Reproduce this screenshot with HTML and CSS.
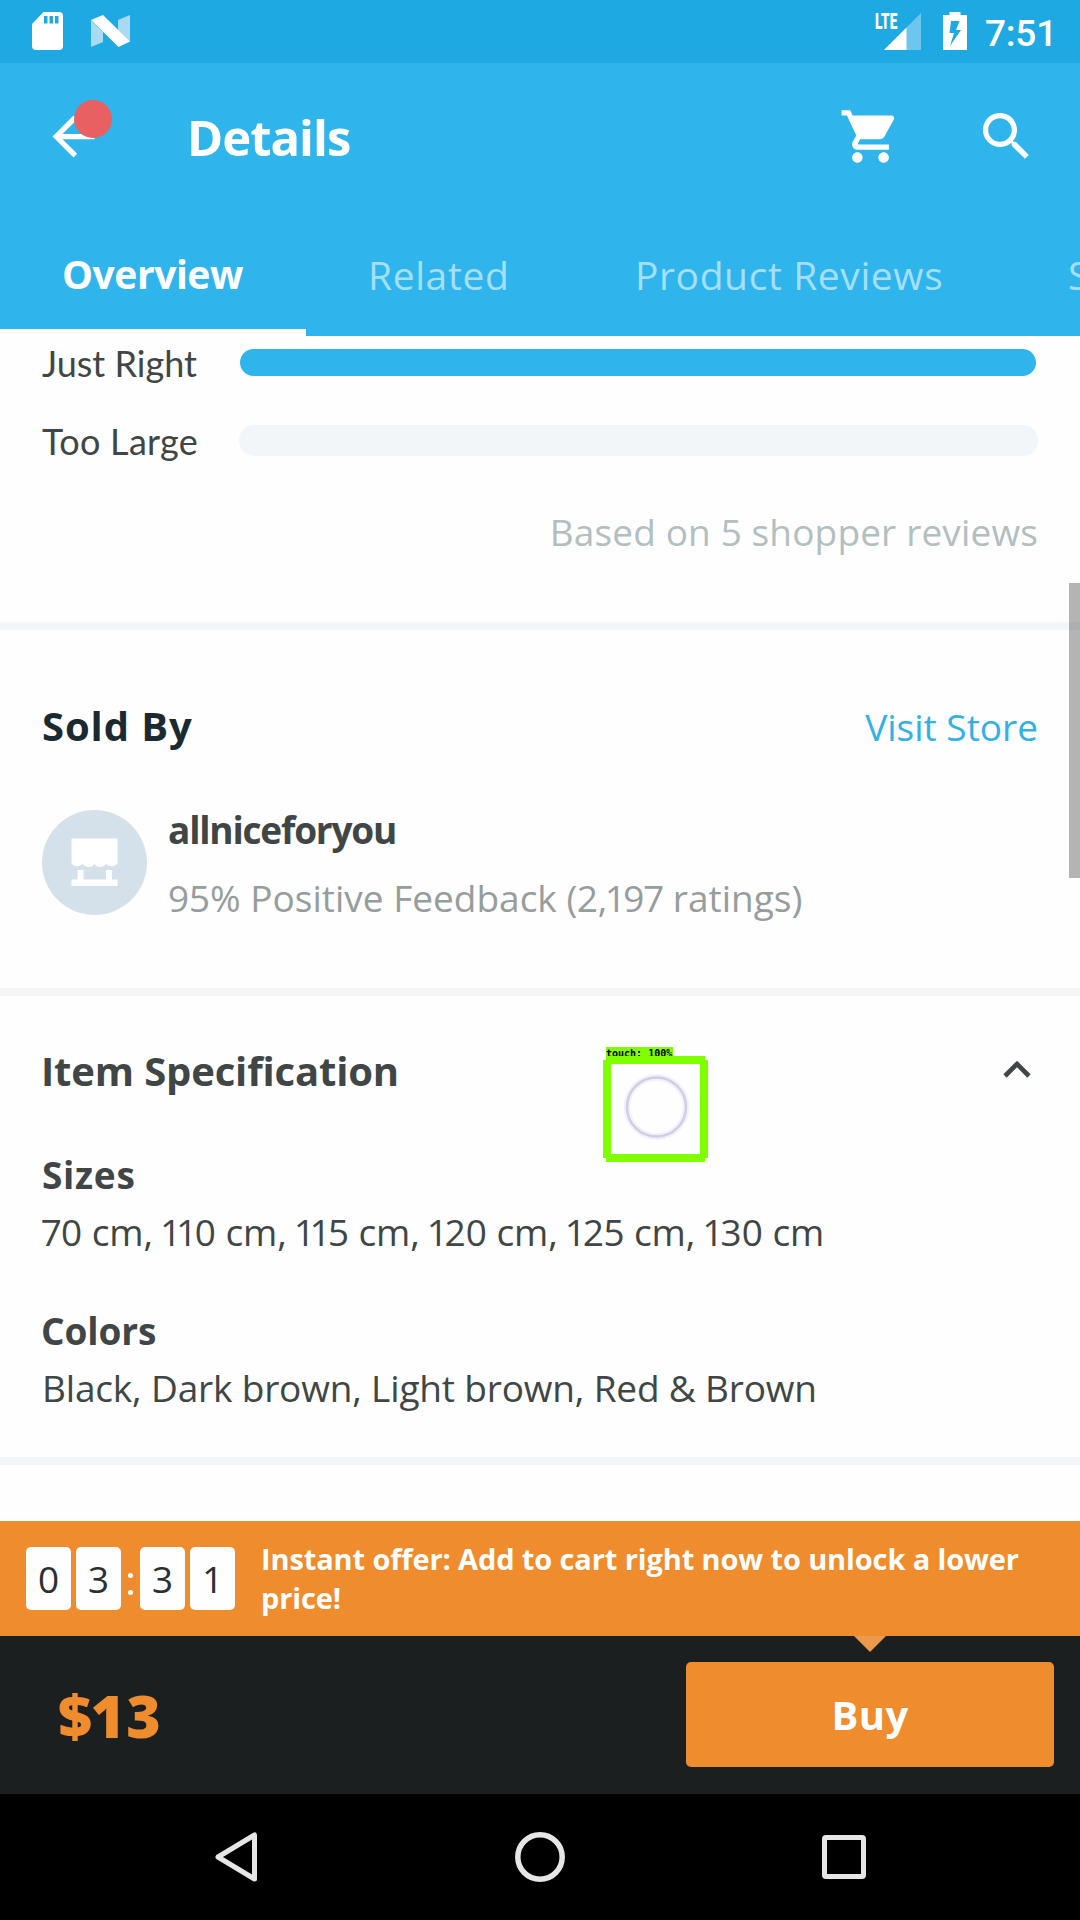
FILE: index.html
```html
<!DOCTYPE html>
<html lang="en">
<head>
<meta charset="utf-8">
<title>Details</title>
<link rel="stylesheet" href="styles.css">
</head>
<body>
<div class="status-bar">
  <div class="status-left">
    <svg class="icon-sd" viewBox="0 0 31 38"><path fill="#fff" fill-rule="evenodd" d="M11.5 0H27a4 4 0 0 1 4 4v30a4 4 0 0 1-4 4H4a4 4 0 0 1-4-4V12zM12 4v7.5h3.5V4zM17.5 4v7.5H21V4zM23 4v7.5h3.500V4z"/></svg>
    <svg class="icon-n" viewBox="0 0 39 32"><path fill="#a8dbf3" d="M0 5.500L12 17v10L0 32zM27 5L39 0v27L27 15z"/><path fill="#fff" d="M0 5L12 0l27 26.500L27.500 32z"/></svg>
  </div>
  <div class="status-right">
    <div class="signal">
      <span class="lte">LTE</span>
      <svg class="icon-signal" viewBox="0 0 37 37"><path fill="#6cc6ed" d="M37 0v37H0z"/><path fill="#fff" d="M22.500 14.500V37H0z"/></svg>
    </div>
    <svg class="icon-battery" viewBox="0 0 24 38"><path fill="#fff" fill-rule="evenodd" d="M6.500 0h11v3H24v35H0V3h6.500zM8 9l-1.500 12h4.500L7 34l11-16h-5l3.500-9z"/></svg>
    <span class="clock">7:51</span>
  </div>
</div>

<header class="header">
  <div class="app-bar">
    <div class="back">
      <svg viewBox="0 0 24 24"><path fill="#fff" d="M20 11H7.830l5.590-5.590L12 4l-8 8 8 8 1.410-1.410L7.830 13H20v-2z"/></svg>
      <span class="badge"></span>
    </div>
    <h1 class="page-title">Details</h1>
    <svg class="icon-cart" viewBox="0 0 24 24"><path fill="#fff" d="M7 18c-1.100 0-1.990.9-1.990 2S5.900 22 7 22s2-.9 2-2-.9-2-2-2zM1 2v2h2l3.600 7.590-1.350 2.450c-.16.28-.25.61-.25.96 0 1.100.9 2 2 2h12v-2H7.420c-.14 0-.25-.11-.25-.25l.03-.12.900-1.630h7.450c.75 0 1.410-.41 1.750-1.030l3.580-6.490A1 1 0 0 0 20 4H5.210l-.94-2H1zm16 16c-1.100 0-1.990.9-1.990 2s.890 2 1.990 2 2-.9 2-2-.9-2-2-2z"/></svg>
    <svg class="icon-search" viewBox="0 0 24 24"><path fill="#fff" d="M15.500 14h-.79l-.28-.27A6.471 6.471 0 0 0 16 9.500 6.500 6.500 0 1 0 9.500 16c1.610 0 3.090-.59 4.230-1.570l.27.28v.79l5 4.990L20.490 19l-4.990-5zm-6 0C7.010 14 5 11.990 5 9.500S7.010 5 9.500 5 14 7.010 14 9.500 11.990 14 9.500 14z"/></svg>
  </div>
  <nav class="tabs">
    <span class="tab tab-active">Overview</span>
    <span class="tab">Related</span>
    <span class="tab tab-reviews">Product Reviews</span>
    <span class="tab tab-next">S</span>
  </nav>
</header>

<main class="content">
  <section class="fit">
    <div class="fit-row"><span class="fit-label fit-tight">Just Right</span><div class="bar"><div class="bar-fill"></div></div></div>
    <div class="fit-row"><span class="fit-label">Too Large</span><div class="bar"></div></div>
    <p class="fit-note">Based on 5 shopper reviews</p>
  </section>

  <section class="seller">
    <div class="seller-head"><h2 class="title-dark">Sold By</h2><a class="store-link">Visit Store</a></div>
    <div class="store">
      <svg class="avatar" viewBox="0 0 105 105"><circle cx="52.500" cy="52.500" r="52.500" fill="#d5e1ea"/><path fill="#fff" d="M29.500 28.500h46v23a5.750 4 0 0 1-11.500 1.500 5.750 4 0 0 1-11.500 0 5.750 4 0 0 1-11.500 0 5.750 4 0 0 1-11.500-1.500zM35.500 60h6v9.500h22.500V60h6v9.500h5.500V76h-46v-6.500h6z"/></svg>
      <div class="store-text"><div class="store-name">allniceforyou</div><div class="store-rating">95% Positive Feedback (2,197 ratings)</div></div>
    </div>
  </section>

  <section class="specs">
    <div class="specs-head"><h2 class="title">Item Specification</h2>
      <svg class="chevron" viewBox="0 0 28 17"><path d="M2 15L14 3l12 12" fill="none" stroke="#3f4645" stroke-width="4.600"/></svg></div>
    <h3 class="spec-name sizes">Sizes</h3>
    <p class="spec-value">70 cm, 110 cm, 115 cm, 120 cm, 125 cm, 130 cm</p>
    <h3 class="spec-name colors">Colors</h3>
    <p class="spec-value spec-colors">Black, Dark brown, Light brown, Red &amp; Brown</p>
  </section>
</main>

<div class="offer">
  <div class="timer"><span class="digit">0</span><span class="digit">3</span><span class="colon"><i></i><i></i></span><span class="digit">3</span><span class="digit">1</span></div>
  <p class="offer-text">Instant offer: Add to cart right now to unlock a lower<br>price!</p>
</div>

<div class="buy-bar">
  <span class="price">$13</span>
  <div class="buy-button">Buy<svg class="pointer" viewBox="0 0 32 16"><path fill="#eb9a4d" d="M0 0h32L16 16z"/></svg></div>
</div>

<div class="nav-bar">
  <svg class="nav-back" viewBox="0 0 42 50"><path d="M39.500 3v44L3 25z" fill="none" stroke="#e6e6e6" stroke-width="5" stroke-linejoin="round"/></svg>
  <svg class="nav-home" viewBox="0 0 50 50"><circle cx="25" cy="25" r="22.200" fill="none" stroke="#e6e6e6" stroke-width="5.500"/></svg>
  <svg class="nav-recent" viewBox="0 0 44 44"><rect x="2.500" y="2.500" width="39" height="39" rx="1.500" fill="none" stroke="#e6e6e6" stroke-width="5"/></svg>
</div>

<div class="scrollbar"></div>
<div class="touch">
  <span class="touch-label">touch: 100%</span>
  <svg class="touch-box" viewBox="0 0 105 106"><path fill="none" stroke="#80ff00" stroke-width="8" d="M3 4h99M3 102h99M4 4v98M101 4v98"/><circle cx="53.500" cy="51" r="29.500" fill="none" stroke="#f1f0fb" stroke-width="6.500"/><circle cx="53.500" cy="51" r="29.500" fill="none" stroke="#cfcee2" stroke-width="2.400"/></svg>
</div>
</body>
</html>
```
FILE: styles.css
```css
* { box-sizing: border-box; margin: 0; padding: 0; }
html, body { width: 1080px; height: 1920px; overflow: hidden; }
body {
  position: relative;
  display: flex;
  flex-direction: column;
  background: #fefefe;
  color: #3f4645;
  font-family: "Open Sans", "Liberation Sans", sans-serif;
  font-variant-ligatures: none;
  font-variant-numeric: proportional-nums;
  white-space: nowrap;
}
svg { display: block; flex: none; }

/* Status bar */
.status-bar {
  flex: none;
  height: 63px;
  display: flex;
  justify-content: space-between;
  padding: 12px 23px 0 32px;
  background: #1fa9e2;
}
.status-left, .status-right { display: flex; align-items: flex-start; }
.icon-sd { width: 31px; height: 38px; }
.icon-n { width: 39px; height: 32px; margin: 3px 0 0 28px; }
.signal { display: flex; margin-right: 22px; }
.lte {
  width: 9px;
  color: #fff;
  font: 900 22px/20px Roboto, sans-serif;
  transform: scaleX(.62);
  transform-origin: 0 0;
}
.icon-signal { width: 37px; height: 37px; margin-top: 1px; }
.icon-battery { width: 24px; height: 38px; margin-right: 18px; }
.clock {
  color: #fff;
  font: 500 37px/44px Roboto, sans-serif;
  font-variant-numeric: normal;
  letter-spacing: -.2px;
}

/* App bar and tabs */
.header { flex: none; height: 273px; background: #2fb5eb; color: #fff; }
.app-bar {
  height: 146px;
  display: flex;
  align-items: center;
  padding: 0 42px;
}
.back { position: relative; width: 63px; height: 63px; }
.back svg { width: 63px; height: 63px; }
.badge {
  position: absolute;
  left: 32px;
  top: -5px;
  width: 38px;
  height: 38px;
  border-radius: 50%;
  background: #e96062;
}
.page-title {
  flex: 1;
  margin: 1px 0 0 82px;
  font-size: 49px;
  line-height: 60px;
  font-weight: 700;
  letter-spacing: -1px;
}
.icon-cart { width: 63px; height: 63px; margin-right: 73px; }
.icon-search { width: 63px; height: 63px; }
.tabs { display: flex; height: 127px; overflow: hidden; }
.tab {
  flex: none;
  width: 264px;
  height: 127px;
  padding: 42px 0 0 62px;
  color: #a4dff8;
  font-size: 39px;
  line-height: 48px;
  letter-spacing: .6px;
}
.tab-active {
  width: 306px;
  border-bottom: 7px solid #fefefe;
  color: #fff;
  font-weight: 700;
  letter-spacing: -.45px;
  padding-top: 41px;
}
.tab-reviews { width: 436px; padding-left: 65px; }
.tab-next { width: 80px; }

/* Scrolling content */
.content { flex: none; height: 1185px; }
.fit { height: 294px; padding: 4px 42px 0; border-bottom: 8px solid #f3f6f8; }
.fit-row { display: flex; align-items: center; height: 44px; margin-bottom: 34px; }
.fit-label {
  width: 197px;
  padding-top: 1px;
  font-family: Lato, "Liberation Sans", sans-serif;
  font-size: 36px;
  line-height: 44px;
  letter-spacing: .3px;
}
.fit-tight { letter-spacing: 0; }
.bar { width: 799px; height: 31px; border-radius: 15px; background: #f3f6f8; }
.bar:has(.bar-fill) { background: none; padding: 2px 2px 2px 1px; }
.bar-fill { height: 27px; border-radius: 13.5px; background: #2fb5eb; }
.fit-note {
  margin-top: 48px;
  text-align: right;
  color: #b2bfbe;
  font-size: 37px;
  line-height: 44px;
  letter-spacing: .15px;
}
.seller { height: 366px; padding: 71px 42px 0; border-bottom: 8px solid #f4f5f6; }
.seller-head { display: flex; justify-content: space-between; align-items: baseline; height: 48px; }
.title-dark, .title { font-size: 40px; line-height: 49px; font-weight: 700; letter-spacing: .9px; }
.title-dark { color: #1b2a30; }
.store-link { color: #33b1e3; font-size: 37px; line-height: 48px; }
.store { display: flex; gap: 22px; margin-top: 58px; }
.avatar { width: 105px; height: 105px; margin-top: 3px; }
.store-name { margin-left: -1px; font-size: 37px; line-height: 45px; height: 44px; font-weight: 700; letter-spacing: -1.2px; }
.store-rating {
  margin-top: 25px;
  margin-left: -1px;
  color: #969d9c;
  font-size: 37px;
  line-height: 44px;
}
.specs { height: 469px; padding: 50px 42px 0; border-bottom: 8px solid #f3f6f8; }
.specs-head { display: flex; justify-content: space-between; height: 48px; }
.title { margin-left: -1px; letter-spacing: -.15px; }
.chevron { width: 28px; height: 17px; margin: 15px 7px 0 0; }
.spec-name { font-size: 37px; line-height: 45px; height: 44px; font-weight: 700; }
.sizes { margin-top: 58px; letter-spacing: .7px; }
.colors { margin-top: 54px; margin-left: -1px; letter-spacing: -.1px; }
.spec-value { margin-top: 14px; font-size: 37px; line-height: 44px; letter-spacing: -.09px; }
.spec-colors { letter-spacing: -.17px; }

/* Countdown offer */
.offer {
  flex: none;
  height: 115px;
  display: flex;
  align-items: flex-start;
  padding: 19px 26px 0;
  background: #ee8c2e;
}
.timer { display: flex; margin-top: 7px; }
.digit {
  width: 45px;
  height: 63px;
  margin-right: 5px;
  border-radius: 5px;
  background: #fefefe;
  color: #2b3031;
  font-size: 37px;
  line-height: 63px;
  text-align: center;
}
.colon { width: 14px; display: flex; flex-direction: column; gap: 12px; padding: 26px 0 0 2px; }
.colon i { width: 5px; height: 5px; border-radius: 50%; background: #fff; }
.offer-text {
  margin-left: 21px;
  color: #fff;
  font-size: 29px;
  line-height: 38.5px;
  font-weight: 700;
  letter-spacing: -.12px;
}

/* Purchase bar */
.buy-bar {
  flex: none;
  height: 158px;
  display: flex;
  justify-content: space-between;
  align-items: flex-start;
  padding: 26px 26px 0 58px;
  background: #1c1f20;
}
.price {
  margin-top: 18px;
  color: #ee8c2e;
  font-size: 59px;
  line-height: 70px;
  font-weight: 800;
  letter-spacing: 1px;
}
.buy-button {
  position: relative;
  width: 368px;
  height: 105px;
  border-radius: 5px;
  background: #ee8c2e;
  color: #fff;
  font-size: 40px;
  line-height: 105px;
  font-weight: 700;
  letter-spacing: .4px;
  text-align: center;
}
.pointer { position: absolute; left: 168px; top: -26px; width: 32px; height: 16px; }

/* System navigation */
.nav-bar {
  flex: none;
  height: 126px;
  display: flex;
  align-items: center;
  padding-left: 215px;
  background: #000;
}
.nav-back { width: 42px; height: 50px; margin-right: 258px; }
.nav-home { width: 50px; height: 50px; margin-right: 257px; }
.nav-recent { width: 44px; height: 44px; }

/* Overlays */
.scrollbar { position: absolute; left: 1069px; top: 583px; width: 11px; height: 295px; background: rgba(0, 0, 0, .29); }
.touch { position: absolute; left: 603px; top: 1047px; }
.touch-label {
  display: block;
  width: 67px;
  height: 13px;
  margin-left: 3px;
  background: #80ff00;
  color: #000;
  font: 700 10px/13px "DejaVu Sans Mono", monospace;
}
.touch-box { width: 105px; height: 106px; margin-top: -4px; }
```
